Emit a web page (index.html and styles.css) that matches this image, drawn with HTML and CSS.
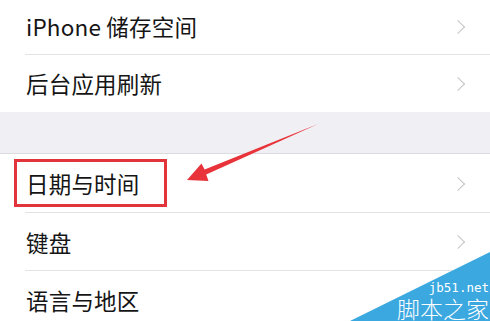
FILE: index.html
```html
<!DOCTYPE html>
<html lang="zh-CN">
<head>
<meta charset="utf-8">
<link rel="stylesheet" href="styles.css">
</head>
<body>
<div class="screen">
  <div class="group">
    <div class="row r1"><span class="label">iPhone 储存空间</span><span class="chev"></span></div>
    <div class="row r2 last"><span class="label">后台应用刷新</span><span class="chev"></span></div>
  </div>
  <div class="gap"></div>
  <div class="group">
    <div class="row r3"><span class="label">日期与时间</span><span class="chev"></span><span class="highlight"></span></div>
    <div class="row r4"><span class="label">键盘</span><span class="chev"></span></div>
    <div class="row r5 last"><span class="label">语言与地区</span><span class="chev"></span></div>
  </div>

  <svg class="arrow" width="490" height="321" viewBox="0 0 490 321">
    <polygon points="187,180 201.5,163.5 204.6,169.6 318,124 206.2,174.4 208.5,181" fill="#e8333a"/>
  </svg>

  <div class="watermark">
    <svg class="wm-bg" width="140" height="70" viewBox="0 0 140 70">
      <polygon points="0,70 140,1 140,70" fill="#3ba8df"/>
    </svg>
    <div class="wm-text">
      <span class="wm-url">jb51.net</span>
      <span class="wm-name">脚本之家</span>
    </div>
  </div>
</div>
</body>
</html>
```

FILE: styles.css
```css
html, body {
  margin: 0;
  padding: 0;
  background: #ffffff;
}
.screen {
  position: relative;
  width: 490px;
  height: 321px;
  overflow: hidden;
  font-family: "Noto Sans CJK SC", "Noto Sans", sans-serif;
  color: #151515;
}
.group {
  background: #ffffff;
}
.row {
  position: relative;
  display: flex;
  align-items: center;
  justify-content: space-between;
  padding-left: 26px;
  padding-right: 24px;
}
.row::after {
  content: "";
  position: absolute;
  left: 25px;
  right: 0;
  bottom: 0;
  height: 1px;
  background: #e3e3e6;
}
.row.last::after {
  display: none;
}
.r1 { height: 57px; margin-top: -2px; }
.r2 { height: 57px; }
.r3 { height: 59px; }
.r4 { height: 58px; }
.r5 { height: 58px; }
.label {
  font-size: 22.5px;
  line-height: 1;
  letter-spacing: 0.2px;
}
.chev {
  width: 9px;
  height: 9px;
  border-right: 1.6px solid #c4c4c8;
  border-top: 1.6px solid #c4c4c8;
  transform: rotate(45deg);
  margin-right: 3px;
}
.gap {
  height: 41px;
  background: #efeff4;
  border-bottom: 1px solid #dcdce0;
}
.highlight {
  position: absolute;
  left: 14px;
  top: 5px;
  width: 147px;
  height: 42px;
  border: 3px solid #e2353b;
}
.arrow {
  position: absolute;
  left: 0;
  top: 0;
}
.watermark {
  position: absolute;
  right: 0;
  bottom: 0;
  width: 140px;
  height: 70px;
}
.wm-bg {
  position: absolute;
  left: 0;
  top: 0;
}
.wm-text {
  position: absolute;
  right: 1px;
  bottom: 0;
  display: flex;
  flex-direction: column;
  align-items: flex-end;
  color: #ffffff;
}
.wm-url {
  font-family: "DejaVu Sans Mono", monospace;
  font-size: 12.5px;
  line-height: 14px;
}
.wm-name {
  font-family: "Noto Sans CJK SC", sans-serif;
  font-weight: 300;
  font-size: 23px;
  line-height: 26px;
}
```
